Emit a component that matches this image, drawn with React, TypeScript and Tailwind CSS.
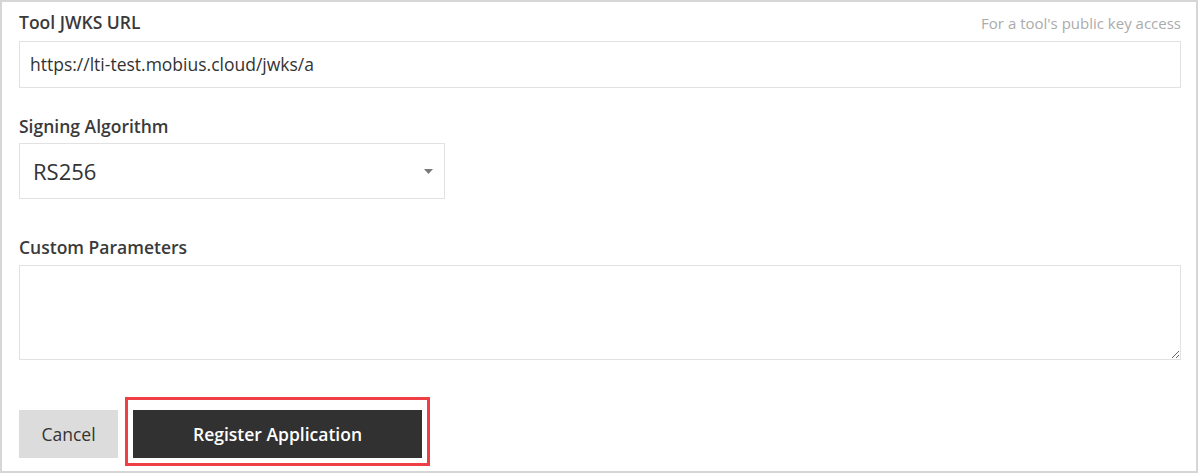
export default function App() {
  return (
    <div
      className="w-[1198px] h-[473px] border-2 border-[#d6d6d6] bg-white pl-[17px] pr-[15px] pt-[8px] text-[#333]"
      style={{ fontFamily: '"Open Sans", "Liberation Sans", sans-serif' }}
    >
      <div className="flex items-baseline justify-between">
        <label className="text-[17.5px] leading-[24px] font-semibold text-[#3a3a3a]">Tool JWKS URL</label>
        <span className="text-[15px] leading-[24px] text-[#ababab]">For a tool's public key access</span>
      </div>
      <div className="mt-[6px] h-[47px] border border-[#e2e2e2] flex items-center px-[10px] text-[17.5px] text-[#333]">
        https://lti-test.mobius.cloud/jwks/a
      </div>

      <label className="block mt-[26px] text-[17.5px] leading-[24px] font-semibold text-[#3a3a3a]">Signing Algorithm</label>
      <div className="mt-[5px] w-[426px] h-[56px] border border-[#e2e2e2] flex items-center justify-between pl-[13px] pr-[11px]">
        <span className="text-[22px] text-[#333]">RS256</span>
        <svg width="9" height="5" viewBox="0 0 9 5" className="mt-[1px]">
          <path d="M0 0h9L4.5 5z" fill="#7a7a7a" />
        </svg>
      </div>

      <label className="block mt-[36px] text-[17.5px] leading-[24px] font-semibold text-[#3a3a3a]">Custom Parameters</label>
      <textarea className="block mt-[6px] w-full h-[95px] border border-[#e2e2e2] outline-none" />

      <div className="mt-[50px] flex gap-[15px]">
        <button className="w-[99px] h-[48px] bg-[#dcdcdc] text-[17.5px] text-[#333]">Cancel</button>
        <div className="relative">
          <button className="w-[289px] h-[48px] bg-[#313131] text-[17.5px] font-semibold text-white">
            Register Application
          </button>
          <div className="absolute left-[-8px] top-[-13px] w-[305px] h-[69px] border-[3px] border-[#ee3f45] pointer-events-none" />
        </div>
      </div>
    </div>
  );
}
